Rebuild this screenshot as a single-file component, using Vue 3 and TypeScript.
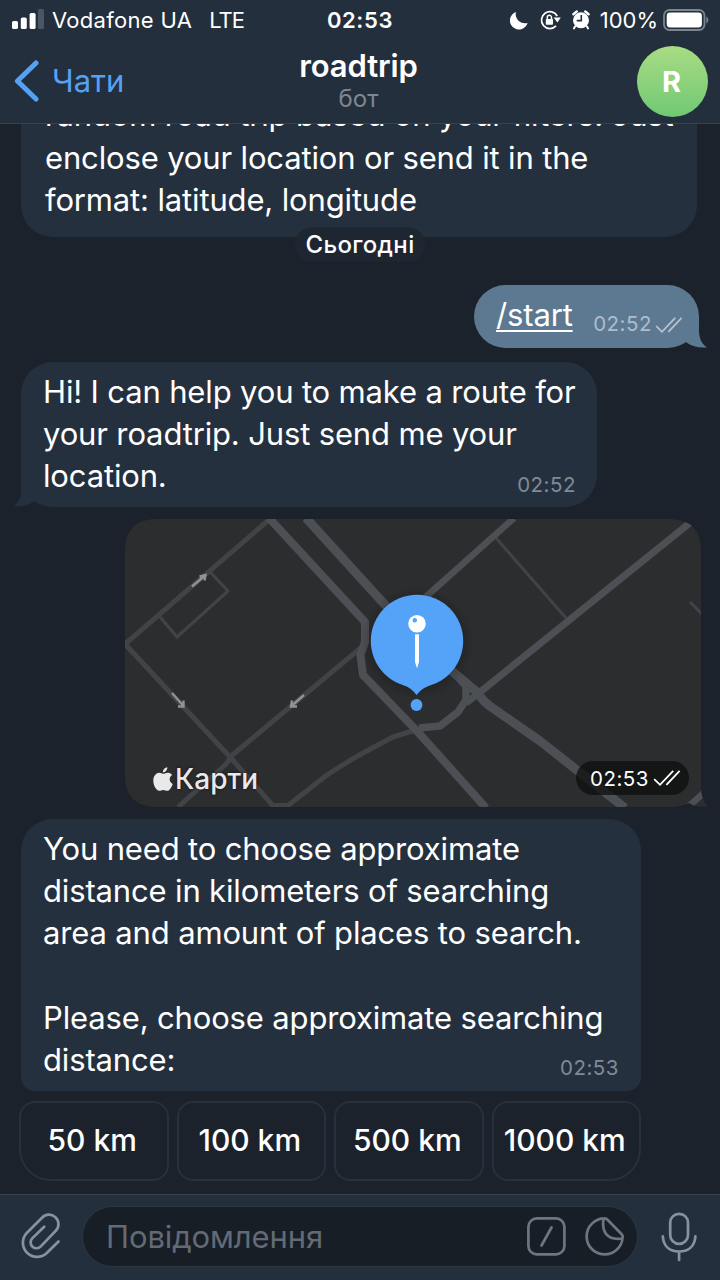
<script setup lang="ts">
interface Choice {
  label: string
}

const intro: string[] = [
  'random road trip based on your filters. Just',
  'enclose your location or send it in the',
  'format: latitude, longitude',
]
const greeting: string[] = ['Hi! I can help you to make a route for', 'your roadtrip. Just send me your', 'location.']
const question: string[] = [
  'You need to choose approximate',
  'distance in kilometers of searching',
  'area and amount of places to search.',
  '',
  'Please, choose approximate searching',
  'distance:',
]
const choices: Choice[] = [{ label: '50 km' }, { label: '100 km' }, { label: '500 km' }, { label: '1000 km' }]
</script>

<template>
  <div class="phone">
    <header class="top">
      <div class="status">
        <div class="carrier">
          <svg class="signal" width="32" height="20" viewBox="0 0 32 20">
            <rect x="0" y="12" width="6" height="8" rx="1.6" fill="#fff" />
            <rect x="8.8" y="8.6" width="6" height="11.4" rx="1.6" fill="#fff" />
            <rect x="17.6" y="4" width="6" height="16" rx="1.6" fill="#fff" />
            <rect x="26" y="0" width="6" height="20" rx="1.6" fill="#4c5663" />
          </svg>
          <span class="operator">Vodafone UA</span>
          <span class="network">LTE</span>
        </div>
        <span class="clock">02:53</span>
        <div class="indicators">
          <svg class="moon" width="18" height="19" viewBox="0 0 18 19">
            <path d="M6 1C4.400 6.600 9.400 13.600 17.600 11.900A9 9 0 1 1 6 1Z" fill="#fff" />
          </svg>
          <svg class="lock" width="21" height="20" viewBox="0 0 21 20">
            <path d="M17.200 6A8.400 8.400 0 1 0 16 15.900" fill="none" stroke="#fff" stroke-width="1.700" />
            <path d="M13.600 7.600H20.800L17.400 12.600Z" fill="#fff" />
            <rect x="5.800" y="9" width="7.200" height="5.800" rx=".8" fill="#fff" />
            <path d="M7.300 9.400V7.400a2.100 2.100 0 0 1 4.200 0V9.400" fill="none" stroke="#fff" stroke-width="1.500" />
          </svg>
          <svg class="alarm" width="18" height="20" viewBox="0 0 18 20">
            <circle cx="9" cy="10.300" r="8" fill="#fff" />
            <path d="M1.400 4.200 4.800 1.400M16.600 4.200 13.200 1.400" stroke="#fff" stroke-width="2.400" stroke-linecap="round" />
            <path d="M3 16.500 2 18.400M15 16.500 16 18.400" stroke="#fff" stroke-width="2" stroke-linecap="round" />
            <path d="M9.300 5V10.600H4.700" fill="none" stroke="#242f3d" stroke-width="1.600" />
          </svg>
          <span class="percent">100%</span>
          <svg class="battery" width="46" height="22" viewBox="0 0 46 22">
            <rect x="1" y="1" width="40.500" height="20" rx="5.500" fill="none" stroke="#7b838d" stroke-width="1.800" />
            <rect x="3.700" y="3.500" width="35.200" height="15" rx="3.400" fill="#fff" />
            <path d="M43.300 7.400Q45.400 8.400 45.400 11T43.300 14.600Z" fill="#7b838d" />
          </svg>
        </div>
      </div>
      <div class="nav">
        <div class="back">
          <svg width="26" height="42" viewBox="0 0 26 42">
            <path d="M22 3 3.400 21 22 39" fill="none" stroke="#55a2f5" stroke-width="5" stroke-linecap="round" stroke-linejoin="round" />
          </svg>
          <span>Чати</span>
        </div>
        <div class="title">
          <h1>roadtrip</h1>
          <p>бот</p>
        </div>
        <div class="avatar">R</div>
      </div>
    </header>

    <main class="chat">
      <div class="bubble intro">
        <p v-for="line in intro" :key="line">{{ line }}</p>
      </div>

      <div class="day"><span>Сьогодні</span></div>

      <div class="bubble start">
        <span class="command">/start</span>
        <span class="time">02:52</span>
        <svg class="checks" width="28" height="18" viewBox="0 0 28 18">
          <path d="M1.200 10.200 7 15.800 20.200 1.800M13.400 15.800 26.600 1.800" fill="none" stroke="#b5c4d2" stroke-width="1.700" />
        </svg>
        <svg class="tail right" width="24" height="32" viewBox="0 0 24 32">
          <path d="M16 0V14C16 22 18.500 28 24 31.300C17 32.300 9 30.500 3.500 26.500L0 24Z" fill="#5d7991" />
        </svg>
      </div>

      <div class="bubble greeting">
        <p v-for="line in greeting" :key="line">{{ line }}</p>
        <span class="time">02:52</span>
        <svg class="tail left" width="24" height="32" viewBox="0 0 24 32">
          <path d="M8 0V14C8 22 5.500 28 0 31.300C7 32.300 15 30.500 20.500 26.500L24 24Z" fill="#25303e" />
        </svg>
      </div>

      <div class="map">
        <svg width="583" height="288" viewBox="0 0 583 288">
          <defs>
            <clipPath id="map-shape">
              <path d="M32 0H544Q576 0 576 32V268Q576 281 583 287.500Q572 289 564 284Q556 288 544 288H32Q0 288 0 256V32Q0 0 32 0Z" />
            </clipPath>
            <radialGradient id="pin-shadow">
              <stop offset=".75" stop-color="#000" stop-opacity=".2" />
              <stop offset="1" stop-color="#000" stop-opacity="0" />
            </radialGradient>
          </defs>
          <g clip-path="url(#map-shape)" fill="none">
            <rect width="583" height="288" fill="#2c2d2f" />
            <g stroke="#414347" stroke-width="5" stroke-linejoin="round">
              <path d="M146-1 0 125 105 238 149 288" />
              <path d="M53 288 99 247Q104 243 105 238L238 127" />
              <path d="M146 286.500H163L202 256Q220 244 238 234L268 218 294 210" />
              <path d="M85 53 103 72 52 118 35 98" stroke-width="3.200" />
              <path d="M371 19 441 99M565 83 577 95" stroke-width="3" />
            </g>
            <g stroke="#4c4f53" stroke-width="8" stroke-linejoin="round">
              <path d="M144-1 240 103V123L235.500 136 238 156 292 212 361 289" />
              <path d="M181-1 262 88 328 153 353 174Q358 183 369 190L415 222 500 289" stroke-width="9" />
              <path d="M330 155 341 167V181L333 193 315 207 294 209" stroke-width="7.500" />
              <path d="M341 184 354 174 566 3" stroke-width="7" />
              <path d="M389-1 295 83M564 287 581 272" stroke-width="6.500" />
            </g>
            <g stroke="#909296" stroke-width="2.400">
              <path d="M67 67.500 80 56.500M74.500 57.500 80.500 56 79.500 61.500" />
              <path d="M47 174 58.500 187M58.500 181.500V187.500H53" />
              <path d="M179 176 166.500 187M167 181.500 166 187.500H172" />
            </g>
            <circle cx="292" cy="124" r="57" fill="url(#pin-shadow)" />
          </g>
          <circle cx="292" cy="122" r="46.200" fill="#55a3f8" />
          <path d="M278 165 300 166.500H306Q298 167.500 291.500 176Q286 168.500 278 166Z" fill="#55a3f8" />
          <circle cx="291.500" cy="186" r="5.900" fill="#55a3f8" />
          <circle cx="292" cy="104.700" r="8.800" fill="#fff" />
          <circle cx="289.800" cy="101.200" r="2.200" fill="#55a3f8" />
          <path d="M290 115.300H294V143L292 149.500 290 143Z" fill="#fff" />
        </svg>
        <div class="brand">
          <svg width="20" height="25" viewBox="0 0 20 25">
            <path d="M10 6.800C12 6.800 13 5.600 15 5.700C17 5.800 18.300 6.700 19.100 8C15.600 10.300 16 15.200 19.700 16.900C18.700 20 16.600 23.800 14.300 23.800C12.700 23.800 12.300 22.900 10.300 22.900C8.300 22.900 7.700 23.800 6.200 23.800C3.300 23.700.3 18.600.3 13.800C.3 8.700 3.300 5.900 6.200 5.800C8 5.800 9 6.800 10 6.800ZM9.900 5.400C9.800 2.800 11.900.5 14.300.3C14.600 3 12.300 5.400 9.900 5.400Z" fill="#e9e9ea" />
          </svg>
          <span>Карти</span>
        </div>
        <div class="stamp">
          <span>02:53</span>
          <svg width="28" height="18" viewBox="0 0 28 18">
            <path d="M1.200 10.200 7 15.800 20.200 1.800M13.400 15.800 26.600 1.800" fill="none" stroke="#fff" stroke-width="1.800" />
          </svg>
        </div>
      </div>

      <div class="bubble question">
        <p v-for="(line, i) in question" :key="i">{{ line }}</p>
        <span class="time">02:53</span>
      </div>

      <div class="choices">
        <button v-for="choice in choices" :key="choice.label" type="button">{{ choice.label }}</button>
      </div>
    </main>

    <footer class="composer">
      <svg class="clip" width="42" height="46" viewBox="0 0 42 46">
        <path d="M38.500 28.500 26.500 40.300A14.200 14.200 0 0 1 6 20.800L22 4.800A9.400 9.400 0 0 1 36 17.500L20.800 33.400A5.700 5.700 0 0 1 12.200 25.400L24.200 13.800" fill="none" stroke="#8592a0" stroke-width="2.700" stroke-linecap="round" stroke-linejoin="round" />
      </svg>
      <div class="field">
        <span>Повідомлення</span>
        <svg class="slash" width="39" height="39" viewBox="0 0 39 39">
          <rect x="1.400" y="1.400" width="36" height="36" rx="8.500" fill="none" stroke="#6d7680" stroke-width="2.700" />
          <path d="M24.500 10.500 14.500 28.500" stroke="#6d7680" stroke-width="2.700" stroke-linecap="round" />
        </svg>
        <svg class="sticker" width="39" height="39" viewBox="0 0 39 39">
          <path d="M19.500 1.400A18 18 0 1 0 37.600 20.500Q38 18.500 36.200 16.700L22.500 2.700Q21 1.200 19.500 1.400ZM18.500 1.800C16.500 15 22 23.500 37 21.500" fill="none" stroke="#6d7680" stroke-width="2.700" stroke-linejoin="round" />
        </svg>
      </div>
      <svg class="mic" width="36" height="50" viewBox="0 0 36 50">
        <rect x="9.200" y="1.800" width="17.800" height="30" rx="8.900" fill="none" stroke="#8592a0" stroke-width="2.700" />
        <path d="M1.800 24.300C2.500 34 8.500 39.500 18.100 39.500S33.700 34 34.400 24.300M18.100 40V48" fill="none" stroke="#8592a0" stroke-width="2.700" stroke-linecap="round" />
      </svg>
    </footer>
  </div>
</template>

<style>
body {
  margin: 0;
  background: #1b222b;
}
</style>

<style scoped>
* {
  box-sizing: border-box;
}

.phone {
  display: flex;
  flex-direction: column;
  width: 720px;
  height: 1280px;
  overflow: hidden;
  background: #1b222b;
  color: #fff;
  font-family: Inter, 'Noto Sans', sans-serif;
}

svg {
  display: block;
  flex: none;
}

.top {
  flex: none;
  height: 124px;
  background: #242f3d;
  border-bottom: 1px solid #38424e;
}

.status {
  display: grid;
  grid-template-columns: 1fr auto 1fr;
  align-items: center;
  height: 40px;
  padding: 0 11px 0 12px;
  font-size: 22px;
}

.carrier,
.indicators {
  display: flex;
  align-items: center;
}

.signal {
  margin: -2px 8px 0 0;
}

.operator {
  letter-spacing: 0.300px;
}

.network {
  margin-left: 17px;
  letter-spacing: -1px;
}

.clock {
  margin-right: 1px;
  font-weight: 600;
  letter-spacing: 0.600px;
}

.indicators {
  justify-content: flex-end;
}

.lock {
  margin-left: 12px;
}

.alarm {
  margin-left: 11px;
}

.percent {
  margin: 0 5px 0 10px;
}

.nav {
  display: grid;
  grid-template-columns: 1fr auto 1fr;
  height: 83px;
  padding: 0 12px 0 14px;
}

.back {
  display: flex;
  align-items: center;
  gap: 12px;
  height: 81px;
  color: #55a2f5;
  font-size: 31px;
}

.title {
  padding: 8px 5px 0 0;
  text-align: center;
}

h1 {
  margin: 0;
  font-size: 31px;
  font-weight: 600;
  letter-spacing: -0.100px;
  line-height: 36px;
}

.title p {
  margin: 2px 0 0;
  color: #7d8793;
  font-size: 24px;
  line-height: 26px;
}

.avatar {
  display: flex;
  align-items: center;
  justify-content: center;
  justify-self: end;
  width: 71px;
  height: 71px;
  margin-top: 6px;
  padding-right: 2px;
  border-radius: 50%;
  background: linear-gradient(#a8dc83, #71c874);
  font-size: 29px;
  font-weight: 700;
}

.chat {
  display: flex;
  flex: 1;
  flex-direction: column;
  justify-content: flex-end;
  align-items: flex-start;
  min-height: 0;
  padding: 0 20px 13px;
  overflow: hidden;
}

.bubble {
  position: relative;
  flex: none;
  margin-left: 1px;
  background: #25303e;
  border-radius: 32px;
  font-size: 31px;
  letter-spacing: -0.150px;
  line-height: 42.200px;
  white-space: nowrap;
}

.bubble p {
  height: 42.200px;
  margin: 0;
}

.intro {
  width: 676px;
  padding: 9px 23px 16px 24px;
}

.day {
  position: relative;
  align-self: center;
  flex: none;
  height: 35px;
  margin-top: -10px;
  padding: 0 10px;
  border-radius: 18px;
  background: #1e2731;
  font-size: 24px;
  font-weight: 500;
  letter-spacing: 0.350px;
  line-height: 35px;
}

.start {
  display: flex;
  align-self: flex-end;
  width: 225px;
  height: 63px;
  margin: 23px 1px 0 0;
  padding: 0 16px 0 22px;
  background: #5d7991;
}

.command {
  padding-top: 9px;
  text-decoration: underline;
  text-decoration-thickness: 2px;
  text-underline-offset: 4px;
}

.time {
  color: #7f8b98;
  font-size: 20.500px;
  letter-spacing: 0.500px;
}

.start .time {
  margin: 18px 0 0 auto;
  color: #adbdcc;
}

.checks {
  margin: 31px 0 0 3px;
}

.tail {
  position: absolute;
  bottom: 0;
}

.tail.right {
  right: -8px;
}

.tail.left {
  left: -8px;
}

.greeting {
  width: 576px;
  height: 145px;
  margin-top: 14px;
  padding: 9px 22px;
}

.greeting .time {
  position: absolute;
  right: 21px;
  bottom: 1px;
}

.map {
  position: relative;
  flex: none;
  width: 583px;
  height: 288px;
  margin: 12px 0 0 105px;
}

.brand {
  position: absolute;
  left: 28px;
  bottom: 11px;
  display: flex;
  align-items: center;
  gap: 2px;
  color: #e9e9ea;
  font-size: 28px;
  font-weight: 500;
  text-shadow: 0 0 3px #111;
}

.stamp {
  position: absolute;
  right: 19px;
  bottom: 12px;
  display: flex;
  align-items: center;
  justify-content: flex-end;
  gap: 4px;
  width: 113px;
  height: 34px;
  padding-right: 8px;
  border-radius: 17px;
  background: rgba(12, 13, 14, 0.750);
  font-size: 20.500px;
  letter-spacing: 0.500px;
}

.question {
  width: 620px;
  height: 272px;
  margin-top: 12px;
  padding: 9px 22px;
  border-radius: 32px 32px 14px 14px;
}

.question .time {
  position: absolute;
  right: 22px;
  bottom: 2px;
}

.choices {
  display: grid;
  grid-template-columns: repeat(4, 1fr);
  gap: 8px;
  flex: none;
  width: 622px;
  height: 80px;
  margin: 10px 0 0 -1px;
}

button {
  padding: 0 3px 3px 0;
  border: 2px solid #28303b;
  border-radius: 16px;
  background: none;
  color: #fff;
  font: 500 30px Inter, sans-serif;
  white-space: nowrap;
}

button:first-child {
  border-bottom-left-radius: 32px;
}

button:last-child {
  border-bottom-right-radius: 32px;
}

.composer {
  display: flex;
  flex: none;
  align-items: flex-start;
  height: 86px;
  padding: 11px 23px 0 20px;
  border-top: 1px solid #38424e;
  background: #242f3d;
}

.clip {
  margin-top: 7px;
}

.field {
  display: flex;
  align-items: center;
  width: 556px;
  height: 61px;
  margin-left: 20px;
  padding: 0 13px 0 23px;
  border: 1px solid #2d3743;
  border-radius: 31px;
  background: #171e26;
  color: #626b75;
  font-size: 31px;
  letter-spacing: -0.100px;
}

.slash {
  margin-left: auto;
}

.sticker {
  margin-left: 19px;
}

.mic {
  margin: 6px 0 0 auto;
}
</style>
